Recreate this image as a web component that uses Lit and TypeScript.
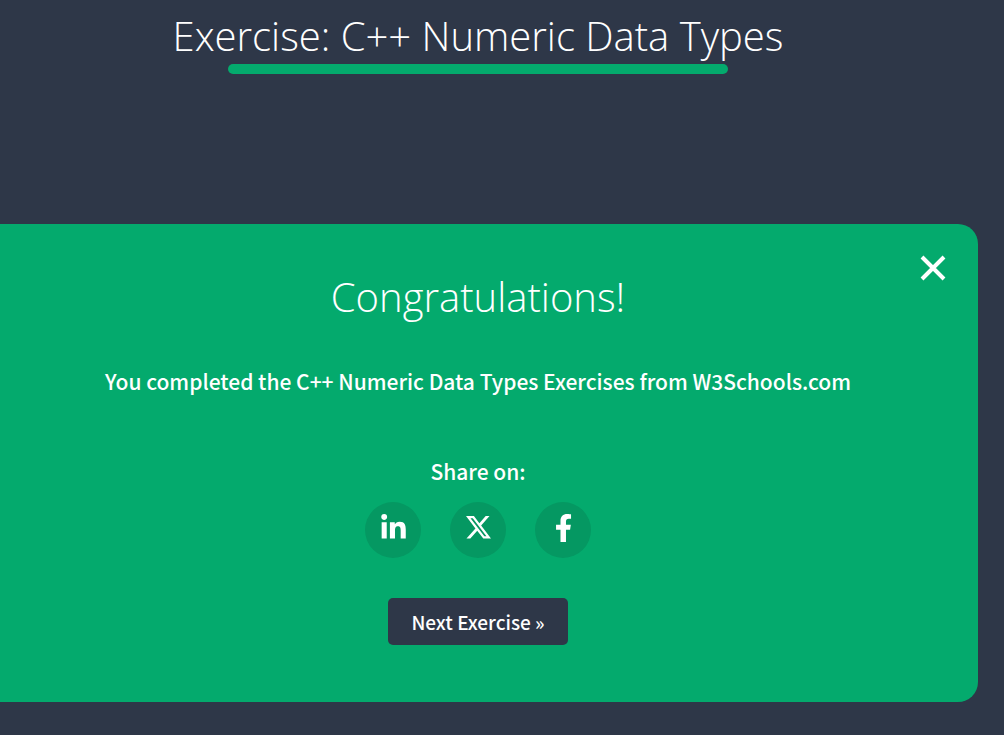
import { LitElement, html, css, svg } from "lit";
import { customElement, state } from "lit/decorators.js";

const shares = [
  {
    label: "Share on LinkedIn",
    icon: svg`<svg viewBox="0 0 448 512" width="25" height="28"><path d="M100.28 448H7.4V148.9h92.88zM53.79 108.1C24.09 108.1 0 83.5 0 53.8a53.79 53.79 0 0 1 107.58 0c0 29.7-24.1 54.3-53.79 54.3zM447.9 448h-92.68V302.4c0-34.7-.7-79.2-48.29-79.2-48.29 0-55.69 37.7-55.69 76.7V448h-92.78V148.9h89.08v40.8h1.3c12.4-23.5 42.69-48.3 87.88-48.3 94 0 111.28 61.9 111.28 142.3V448z"/></svg>`,
  },
  {
    label: "Share on X",
    icon: svg`<svg viewBox="0 0 24 23" width="25" height="24"><path d="M18.9 0h3.68l-8.04 9.19L24 21.7h-7.41l-5.8-7.58-6.64 7.58H.46l8.6-9.83L0 0h7.59l5.25 6.93zM17.61 19.5h2.04L6.49 2.1H4.3z"/></svg>`,
  },
  {
    label: "Share on Facebook",
    icon: svg`<svg viewBox="22 0 256 512" width="16" height="28"><path d="M279.14 288l14.22-92.66h-88.91v-60.13c0-25.35 12.42-50.06 52.24-50.06h40.42V6.26S260.43 0 225.36 0c-73.22 0-121.08 44.38-121.08 124.72v70.62H22.89V288h81.39v224h100.17V288z"/></svg>`,
  },
];

@customElement("app-root")
export class AppRoot extends LitElement {
  static styles = css`
    :host {
      display: block;
      box-sizing: border-box;
      min-height: 100vh;
      padding-right: 26px;
      overflow: hidden;
      background: #2e3748;
      color: #fff;
      font-family: "Noto Sans CJK SC", "Open Sans", sans-serif;
    }
    .header {
      display: flex;
      flex-direction: column;
      align-items: center;
      padding: 8px 22px 0 0;
    }
    .title {
      margin: 0;
      font: 300 40px/56px "Open Sans", "Noto Sans", sans-serif;
      text-align: center;
    }
    .progress {
      width: 100%;
      max-width: 500px;
      height: 10px;
      border-radius: 5px;
      background: #04aa6d;
    }
    .card {
      display: flex;
      flex-direction: column;
      align-items: center;
      margin-top: 150px;
      padding: 23px 22px 57px 0;
      border-radius: 0 20px 20px 0;
      background: #04aa6d;
    }
    .close {
      align-self: flex-end;
      display: flex;
      margin-bottom: -20px;
      padding: 8px 10px;
      border: 0;
      background: none;
      color: inherit;
      cursor: pointer;
    }
    .message {
      margin: 40px 0 0;
      font-size: 21px;
      font-weight: 500;
      line-height: 32px;
      text-align: center;
    }
    .share-label {
      margin: 58px 0 15px;
      font-size: 21px;
      font-weight: 500;
      line-height: 32px;
    }
    .shares {
      display: flex;
      gap: 29px;
    }
    .share {
      display: flex;
      align-items: center;
      justify-content: center;
      box-sizing: border-box;
      width: 56px;
      height: 56px;
      padding-bottom: 4px;
      border-radius: 50%;
      background: #059862;
      color: inherit;
    }
    svg {
      display: block;
      fill: currentColor;
      overflow: visible;
    }
    .next {
      margin-top: 40px;
      padding: 0 23px;
      border: 0;
      border-radius: 5px;
      background: #2e3748;
      color: inherit;
      font: inherit;
      font-size: 19px;
      font-weight: 500;
      line-height: 47px;
      cursor: pointer;
    }
  `;

  @state() private open = true;

  render() {
    return html`
      <header class="header">
        <h1 class="title">Exercise: C++ Numeric Data Types</h1>
        <div class="progress"></div>
      </header>
      ${this.open
        ? html`<main class="card">
            <button class="close" aria-label="Close" @click=${() => (this.open = false)}>
              <svg viewBox="0 0 26 26" width="26" height="26">
                <path d="M2 2L24 24M24 2L2 24" stroke="currentColor" stroke-width="4" />
              </svg>
            </button>
            <h2 class="title">Congratulations!</h2>
            <p class="message">You completed the C++ Numeric Data Types Exercises from W3Schools.com</p>
            <p class="share-label">Share on:</p>
            <nav class="shares">
              ${shares.map((s) => html`<a class="share" href="#" aria-label=${s.label}>${s.icon}</a>`)}
            </nav>
            <button class="next">Next Exercise »</button>
          </main>`
        : ""}
    `;
  }
}
